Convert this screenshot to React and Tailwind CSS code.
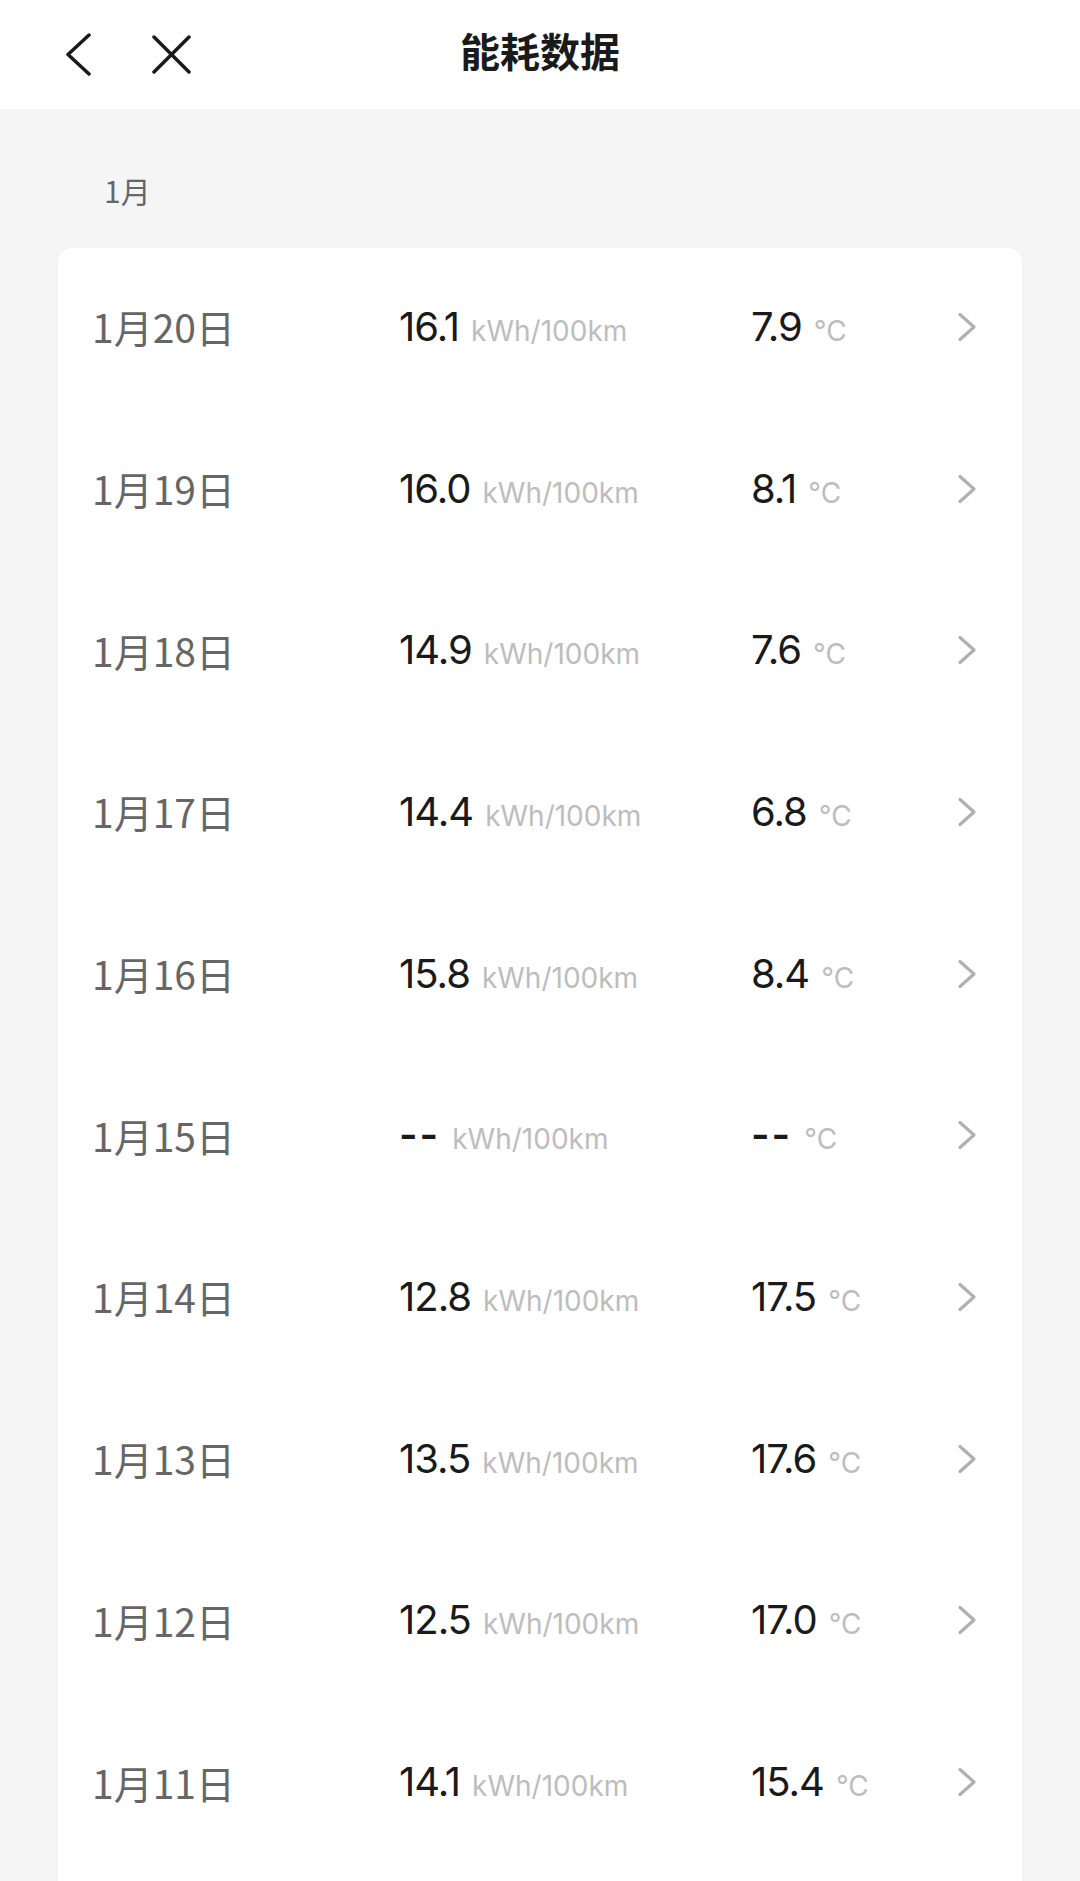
import React from "react";

const ROWS = [
  { date: "1月20日", kwh: "16.1", temp: "7.9" },
  { date: "1月19日", kwh: "16.0", temp: "8.1" },
  { date: "1月18日", kwh: "14.9", temp: "7.6" },
  { date: "1月17日", kwh: "14.4", temp: "6.8" },
  { date: "1月16日", kwh: "15.8", temp: "8.4" },
  { date: "1月15日", kwh: null, temp: null },
  { date: "1月14日", kwh: "12.8", temp: "17.5" },
  { date: "1月13日", kwh: "13.5", temp: "17.6" },
  { date: "1月12日", kwh: "12.5", temp: "17.0" },
  { date: "1月11日", kwh: "14.1", temp: "15.4" },
];

const cjk = "font-['Noto_Sans_CJK_SC',sans-serif]";
const num = "font-['Inter','Noto_Sans_CJK_SC',sans-serif]";

function Value({ value, unit }) {
  return (
    <div className="flex items-baseline">
      {value ? (
        <span className={`${num} text-[40px] leading-none text-[#1a1a1a] tracking-[-1px]`}>
          {value}
        </span>
      ) : (
        <span className={`${num} text-[40px] leading-none text-[#1a1a1a] font-semibold tracking-[2px]`}>
          --
        </span>
      )}
      <span className={`${num} ml-[12px] text-[28px] leading-none text-[#bdbdbd]`}>{unit}</span>
    </div>
  );
}

function Row({ row }) {
  return (
    <div className="h-[161.7px] grid grid-cols-[307px_352px_1fr_auto] items-center pl-[34px] pr-[45px] pb-[4px]">
      <span className={`${cjk} text-[39px] leading-none text-[#666666]`}>{row.date}</span>
      <Value value={row.kwh} unit="kWh/100km" />
      <Value value={row.temp} unit="°C" />
      <svg width="20" height="30" viewBox="0 0 20 30" fill="none">
        <path d="M3 2.5 L17 15 L3 27.5" stroke="#b0b0b0" strokeWidth="3.2" strokeLinecap="round" strokeLinejoin="round" />
      </svg>
    </div>
  );
}

export default function App() {
  return (
    <div className="w-[1080px] h-[1881px] overflow-hidden bg-[#f5f5f5] flex flex-col">
      {/* Header */}
      <div className="h-[109px] bg-white relative flex items-center shrink-0">
        <div className="flex items-center pl-[65px]">
          <svg width="26" height="43" viewBox="0 0 26 43" fill="none">
            <path d="M24 2 L3 21.5 L24 41" stroke="#1a1a1a" strokeWidth="3.5" strokeLinecap="round" strokeLinejoin="round" />
          </svg>
          <svg className="ml-[61px]" width="39" height="39" viewBox="0 0 39 39" fill="none">
            <path d="M2 2 L37 37 M37 2 L2 37" stroke="#1a1a1a" strokeWidth="3.5" strokeLinecap="round" />
          </svg>
        </div>
        <div className={`absolute inset-x-0 top-0 h-full pb-[10px] flex items-center justify-center ${cjk} text-[40px] font-semibold text-[#1a1a1a] pointer-events-none`}>
          能耗数据
        </div>
      </div>

      {/* Month label */}
      <div className={`pt-[61px] mb-[38px] pl-[104px] ${cjk} text-[30px] leading-[40px] text-[#666666]`}>
        1月
      </div>

      {/* List card */}
      <div className="mx-[58px] flex-1 bg-white rounded-t-[14px]">
        {ROWS.map((row) => (
          <Row key={row.date} row={row} />
        ))}
      </div>
    </div>
  );
}
